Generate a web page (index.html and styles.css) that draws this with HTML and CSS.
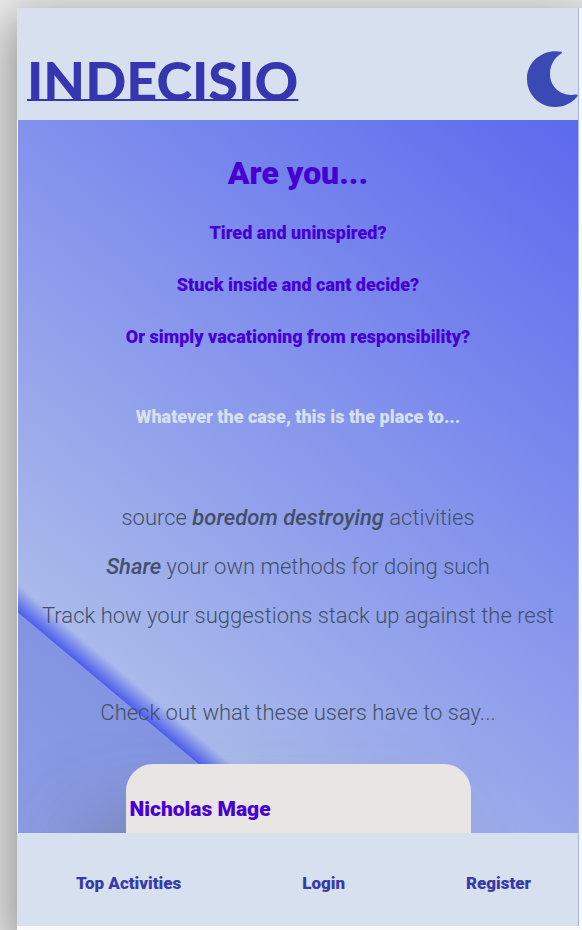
FILE: index.html
```html
<!DOCTYPE html>
<html lang="en">
<head>
<meta charset="utf-8">
<meta name="viewport" content="width=device-width, initial-scale=1">
<title>Indecisio</title>
<link rel="stylesheet" href="styles.css">
</head>
<body>
<div class="shell">
  <div class="app">
    <header class="header">
      <a class="brand" href="#">INDECISIO</a>
      <button class="theme" type="button" aria-label="Dark mode">
        <svg class="moon" viewBox="0 0 51 56" aria-hidden="true"><path d="M34.500 .8C19 -2.500 0 8 0 28C0 43 12 56 28 56C38 56 46 51 50.300 45.500Q51.500 43.300 49 43.500C34 46 23 36 23 23C23 13 28.500 6 34.300 2.600Q35.500 1.300 34.500 .8Z"/></svg>
      </button>
    </header>
    <main class="main">
      <h1 class="title">Are you...</h1>
      <div class="questions">
        <h2 class="line">Tired and uninspired?</h2>
        <h2 class="line">Stuck inside and cant decide?</h2>
        <h2 class="line">Or simply vacationing from responsibility?</h2>
      </div>
      <h2 class="line lead">Whatever the case, this is the place to...</h2>
      <div class="points">
        <p>source <em>boredom destroying</em> activities</p>
        <p><em>Share</em> your own methods for doing such</p>
        <p>Track how your suggestions stack up against the rest</p>
      </div>
      <p class="invite">Check out what these users have to say...</p>
      <article class="card">
        <h3 class="name">Nicholas Mage</h3>
      </article>
    </main>
    <nav class="nav">
      <a href="#">Top Activities</a>
      <a href="#">Login</a>
      <a href="#">Register</a>
    </nav>
  </div>
</div>
</body>
</html>
```
FILE: styles.css
```css
* {
  box-sizing: border-box;
}

body {
  margin: 0;
  height: 100vh;
  overflow: hidden;
  display: flex;
  padding: 8px 0 0 17px;
  background: #eeeeee;
  color: #425068;
  font-family: Roboto, "Open Sans", sans-serif;
}

h1, h2, h3, p {
  margin: 0;
}

.shell {
  flex: 1;
  display: flex;
  padding: 0 3px 4px 0;
  background: #fafafa;
  box-shadow: 0 16px 48px 8px rgba(0, 0, 0, 0.4);
}

.app {
  flex: 1;
  min-width: 0;
  display: flex;
  flex-direction: column;
  border-right: 1px solid #a9b1f0;
}

.header {
  display: flex;
  justify-content: space-between;
  align-items: flex-end;
  height: 112px;
  padding: 0 0 13px 10px;
  background: #d7e0ee;
}

.brand {
  color: #3636b0;
  font: 900 54px/52px Lato, sans-serif;
  text-decoration: underline;
  text-decoration-thickness: 2px;
  text-underline-offset: -2px;
  text-decoration-skip-ink: none;
}

.theme {
  padding: 0;
  border: 0;
  background: none;
}

.moon {
  display: block;
  width: 51px;
  height: 56px;
  fill: #3a49b4;
}

.main {
  flex: 1;
  min-height: 0;
  overflow: hidden;
  margin-left: 1px;
  padding-top: 33px;
  text-align: center;
  background: linear-gradient(40deg, #8b9ce4 0%, #8395e2 18.600%, #4f5fee 18.700%, #a9b9ea 21%, #5b69ee 100%);
}

.title {
  color: #4800d2;
  font-size: 32px;
  font-weight: 900;
  line-height: 40px;
}

.questions {
  display: grid;
  gap: 32px;
  margin-top: 30px;
}

.line {
  color: #4800d2;
  font-size: 18px;
  font-weight: 900;
  line-height: 20px;
}

.lead {
  margin-top: 60px;
  color: #d7e0ee;
}

.points {
  display: grid;
  gap: 24px;
  margin-top: 78px;
}

.points p,
.invite {
  font-size: 22px;
  font-weight: 300;
  line-height: 25px;
}

.points em {
  font-weight: 500;
}

.invite {
  margin-top: 72px;
}

.card {
  max-width: 345px;
  min-height: 160px;
  margin: 39px auto 0;
  padding: 33px 4px;
  border-radius: 27px;
  background: #e9e5e4;
  text-align: left;
  box-shadow: -40px 60px 80px rgba(100, 100, 100, 0.5);
}

.name {
  color: #4800d2;
  font-size: 21px;
  font-weight: 900;
  line-height: 25px;
}

.nav {
  display: flex;
  justify-content: space-between;
  align-items: center;
  height: 93px;
  padding: 6px 47px 0 59px;
  background: #d7e0ee;
}

.nav a {
  color: #373aa8;
  font-size: 17px;
  font-weight: 900;
  line-height: 20px;
  text-decoration: none;
}
```
